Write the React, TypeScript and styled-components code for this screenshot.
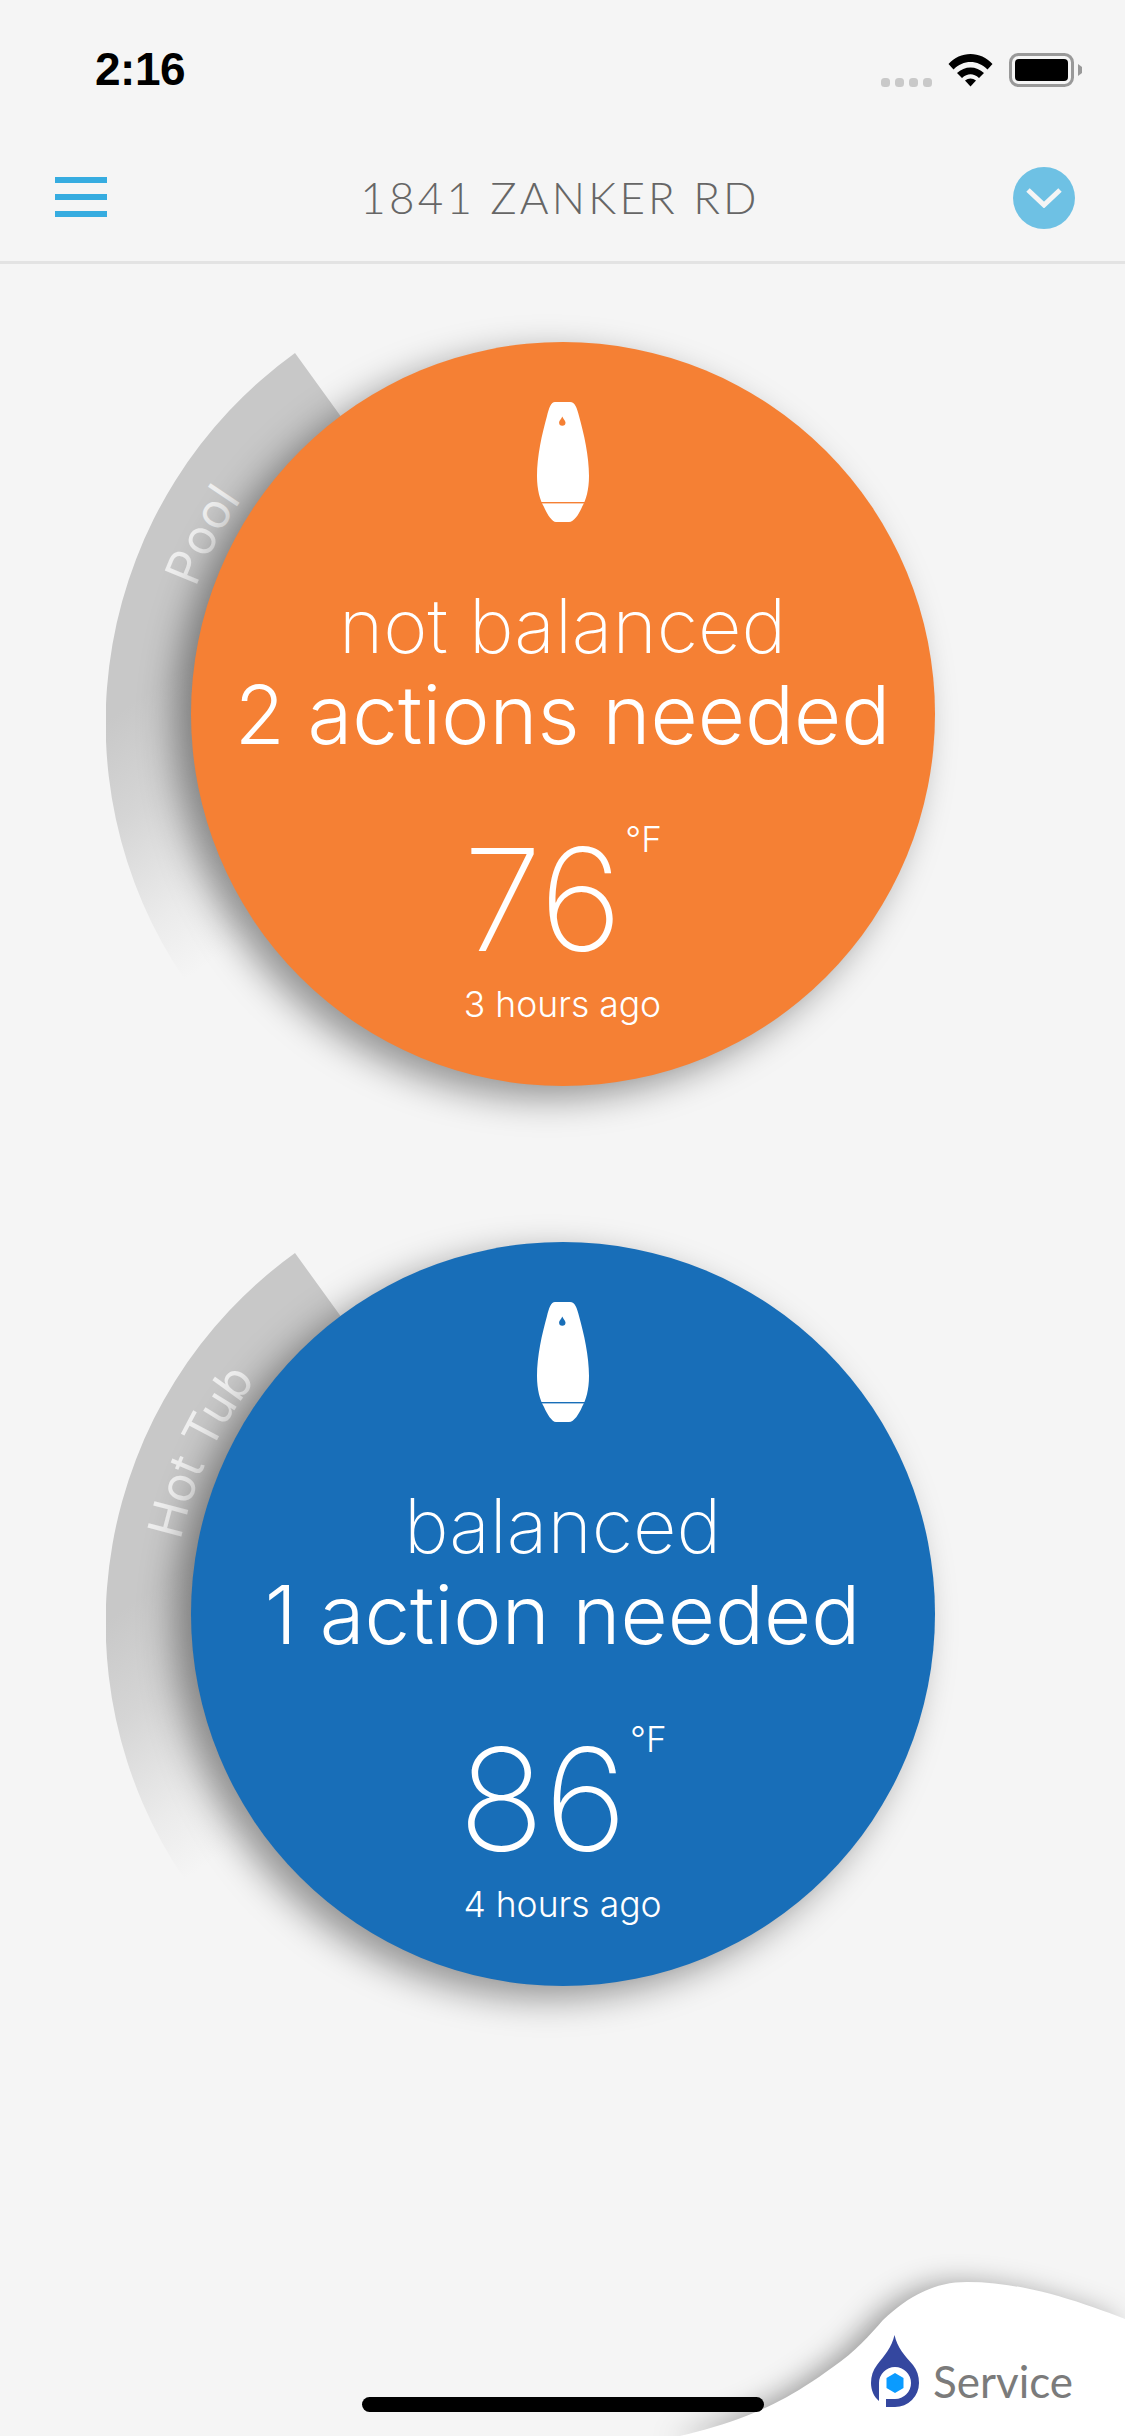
import React from "react";
import styled, { createGlobalStyle } from "styled-components";

const GlobalStyle = createGlobalStyle`
  html, body {
    margin: 0;
    padding: 0;
    background: #f5f5f5;
  }
  * {
    box-sizing: border-box;
  }
`;

const Page = styled.div`
  position: relative;
  width: 1125px;
  height: 2436px;
  overflow: hidden;
  background: #f5f5f5;
  font-family: "Inter", "Liberation Sans", sans-serif;
`;

const StatusBar = styled.div`
  height: 135px;
  padding: 43px 43px 0 95px;
  display: flex;
  justify-content: space-between;
  align-items: flex-start;
`;

const Clock = styled.div`
  font-family: "Liberation Sans", sans-serif;
  font-weight: 700;
  font-size: 46px;
  line-height: 52px;
  letter-spacing: -0.5px;
  color: #000;
`;

const StatusIcons = styled.div`
  display: flex;
  align-items: flex-end;
  gap: 16px;
  height: 46px;
  padding-bottom: 2px;
`;

const Header = styled.header`
  height: 129px;
  padding: 32px 50px 0 55px;
  display: flex;
  justify-content: space-between;
  align-items: flex-start;
  border-bottom: 3px solid #e3e3e3;
`;

const Burger = styled.div`
  width: 52px;
  margin-top: 10px;
  display: flex;
  flex-direction: column;
  gap: 11px;
`;

const BurgerLine = styled.span`
  display: block;
  height: 6px;
  background: #36ace0;
`;

const Title = styled.h1`
  margin: 5px 0 0 0;
  font-family: "Lato", sans-serif;
  font-weight: 300;
  font-size: 44px;
  line-height: 50px;
  letter-spacing: 3.2px;
  color: #666;
`;

const DropdownButton = styled.div`
  width: 62px;
  height: 62px;
  border-radius: 50%;
  background: #6ec1e4;
  display: flex;
  align-items: center;
  justify-content: center;
`;

const Main = styled.main`
  padding-top: 78px;
  display: flex;
  flex-direction: column;
  align-items: center;
  gap: 156px;
`;

const Gauge = styled.section`
  position: relative;
  width: 744px;
  height: 744px;
`;

const Ring = styled.svg`
  position: absolute;
  left: -85px;
  top: -76px;
  width: 912px;
  height: 912px;
`;

const RingLabel = styled.text`
  font-family: "Inter", sans-serif;
  font-weight: 400;
  font-size: 48px;
  fill: #efefef;
`;

const Dial = styled.div<{ $color: string }>`
  position: relative;
  width: 744px;
  height: 744px;
  border-radius: 50%;
  background: ${({ $color }) => $color};
  box-shadow: -16px 12px 36px rgba(0, 0, 0, 0.4);
  display: flex;
  flex-direction: column;
  align-items: center;
  padding-top: 60px;
  color: #fff;
`;

const Status = styled.div`
  margin-top: 60px;
  font-weight: 200;
  font-size: 75.5px;
  line-height: 88px;
  white-space: nowrap;
`;

const Actions = styled.div`
  font-weight: 300;
  font-size: 81.5px;
  line-height: 90px;
  white-space: nowrap;
`;

const Temperature = styled.div`
  margin-top: 69px;
  display: flex;
  align-items: flex-start;
  gap: 3px;
`;

const Degrees = styled.span`
  font-weight: 150;
  font-size: 142px;
  line-height: 140px;
`;

const Unit = styled.span`
  margin-top: -10px;
  font-weight: 300;
  font-size: 35px;
  line-height: 40px;
`;

const Updated = styled.div`
  margin-top: 14px;
  font-weight: 300;
  font-size: 35.5px;
  line-height: 44px;
  white-space: nowrap;
`;

const Corner = styled.div`
  position: absolute;
  right: 0;
  bottom: 0;
  width: 525px;
  height: 186px;
`;

const CornerShape = styled.svg`
  position: absolute;
  inset: 0;
  width: 525px;
  height: 186px;
  overflow: visible;
  filter: drop-shadow(-12px 2px 14px rgba(0, 0, 0, 0.38));
`;

const Brand = styled.div`
  position: absolute;
  left: 271px;
  top: 85px;
  display: flex;
  align-items: flex-end;
  gap: 14px;
`;

const BrandName = styled.span`
  font-family: "Lato", sans-serif;
  font-weight: 400;
  font-size: 44px;
  line-height: 54px;
  color: #7b7b7b;
`;

const HomeBar = styled.div`
  position: absolute;
  left: 362px;
  bottom: 24px;
  width: 402px;
  height: 15px;
  border-radius: 8px;
  background: #000;
`;

const SignalDots = () => (
  <svg width="51" height="9" viewBox="0 0 51 9">
    {[0, 14, 28, 42].map((x) => (
      <rect key={x} x={x} y="0" width="9" height="9" rx="3.5" fill="#c9c9c9" />
    ))}
  </svg>
);

const WifiIcon = () => (
  <svg width="45" height="34" viewBox="0 0 45 34">
    <path d="M0.5 11 C12 -2.5 33 -2.5 44.5 11 L39.5 16.5 C30 6.5 15 6.5 5.5 16.5 Z" fill="#000" />
    <path d="M9 20 C16.5 12.5 28.5 12.5 36 20 L31 25 C25.5 20 19.5 20 14 25 Z" fill="#000" />
    <path d="M17 27.5 C20.5 24.8 24.5 24.8 28 27.5 L22.5 33.5 Z" fill="#000" />
  </svg>
);

const BatteryIcon = () => (
  <svg width="73" height="34" viewBox="0 0 73 34">
    <rect x="1.5" y="1.5" width="62" height="31" rx="8" fill="none" stroke="#999" strokeWidth="3" />
    <rect x="6" y="6" width="53" height="22" rx="4" fill="#000" />
    <path d="M69 11 L73 14 V20 L69 23 Z" fill="#999" />
  </svg>
);

const DeviceIcon = ({ color }: { color: string }) => (
  <svg width="52" height="120" viewBox="0 0 52 120">
    <path
      d="M18 0 H33 C38 0 40 6 42 14 C47 32 52 54 52 74 C52 88 49 98 45 105 C42 112 37 120 32 120 H19 C15 120 10 112 7 105 C3 98 0 88 0 74 C0 54 5 32 10 14 C12 6 14 0 18 0 Z"
      fill="#fff"
    />
    <path d="M25.3 14.5 C27 18 28.5 19 28.5 20.5 A3.2 3.2 0 0 1 22.1 20.5 C22.1 19 23.6 18 25.3 14.5 Z" fill={color} />
    <rect x="4" y="100" width="44" height="1.4" fill={color} />
  </svg>
);

const BrandMark = () => (
  <svg width="48" height="73" viewBox="0 0 48 73">
    <path
      d="M23.5 0 C26 12 34 21 42 30 C46 35 48 41 48 48 A24 24 0 0 1 24 72 L8 72 V66 C3 62 0 55 0 48 C0 41 2 35 6 30 C13 21 21 12 23.5 0 Z"
      fill="#34479f"
    />
    <path d="M8 73 V48 A16 16 0 1 1 24 64 H15 V73 Z" fill="#fff" />
    <path d="M24 38 L32.5 43 V53 L24 58 L15.5 53 V43 Z" fill="#0a9bff" />
  </svg>
);

interface PoolDialProps {
  id: string;
  label: string;
  labelOffset: number;
  color: string;
  status: string;
  actions: string;
  temperature: number;
  updated: string;
}

const PoolDial = ({ id, label, labelOffset, color, status, actions, temperature, updated }: PoolDialProps) => (
  <Gauge>
    <Ring viewBox="0 0 912 912">
      <defs>
        <linearGradient id={`${id}-fade`} gradientUnits="userSpaceOnUse" x1="-67" y1="501" x2="79" y2="714">
          <stop offset="0" stopColor="#c8c8c8" />
          <stop offset="0.35" stopColor="#d5d5d5" />
          <stop offset="0.75" stopColor="#ebebeb" />
          <stop offset="1" stopColor="#f5f5f5" />
        </linearGradient>
        <path id={`${id}-arc`} d="M66 456 A390 390 0 0 1 456 66" fill="none" />
      </defs>
      <path
        d="M79 714 A456 456 0 0 1 189 87 L268.5 197 A320 320 0 0 0 192 637 Z"
        fill={`url(#${id}-fade)`}
      />
      <RingLabel>
        <textPath href={`#${id}-arc`} startOffset={labelOffset}>
          {label}
        </textPath>
      </RingLabel>
    </Ring>
    <Dial $color={color}>
      <DeviceIcon color={color} />
      <Status>{status}</Status>
      <Actions>{actions}</Actions>
      <Temperature>
        <Degrees>{temperature}</Degrees>
        <Unit>°F</Unit>
      </Temperature>
      <Updated>{updated}</Updated>
    </Dial>
  </Gauge>
);

const App = () => (
  <Page>
    <GlobalStyle />
    <StatusBar>
      <Clock>2:16</Clock>
      <StatusIcons>
        <SignalDots />
        <WifiIcon />
        <BatteryIcon />
      </StatusIcons>
    </StatusBar>
    <Header>
      <Burger>
        <BurgerLine />
        <BurgerLine />
        <BurgerLine />
      </Burger>
      <Title>1841 ZANKER RD</Title>
      <DropdownButton>
        <svg width="36" height="20" viewBox="0 0 36 20">
          <path d="M2 2 L18 17 L34 2" fill="none" stroke="#f5f5f5" strokeWidth="5" />
        </svg>
      </DropdownButton>
    </Header>
    <Main>
      <PoolDial
        id="pool"
        label="Pool"
        labelOffset={137}
        color="#f58034"
        status="not balanced"
        actions="2 actions needed"
        temperature={76}
        updated="3 hours ago"
      />
      <PoolDial
        id="hot-tub"
        label="Hot Tub"
        labelOffset={82}
        color="#186eb8"
        status="balanced"
        actions="1 action needed"
        temperature={86}
        updated="4 hours ago"
      />
    </Main>
    <Corner>
      <CornerShape viewBox="0 0 525 186">
        <path
          d="M80 186 C130 174 175 160 233 117 C255 102 270 85 283 70 C310 45 335 32 367 32 C425 32 480 52 525 69 V186 Z"
          fill="#fff"
        />
      </CornerShape>
      <Brand>
        <BrandMark />
        <BrandName>Service</BrandName>
      </Brand>
    </Corner>
    <HomeBar />
  </Page>
);

export default App;
